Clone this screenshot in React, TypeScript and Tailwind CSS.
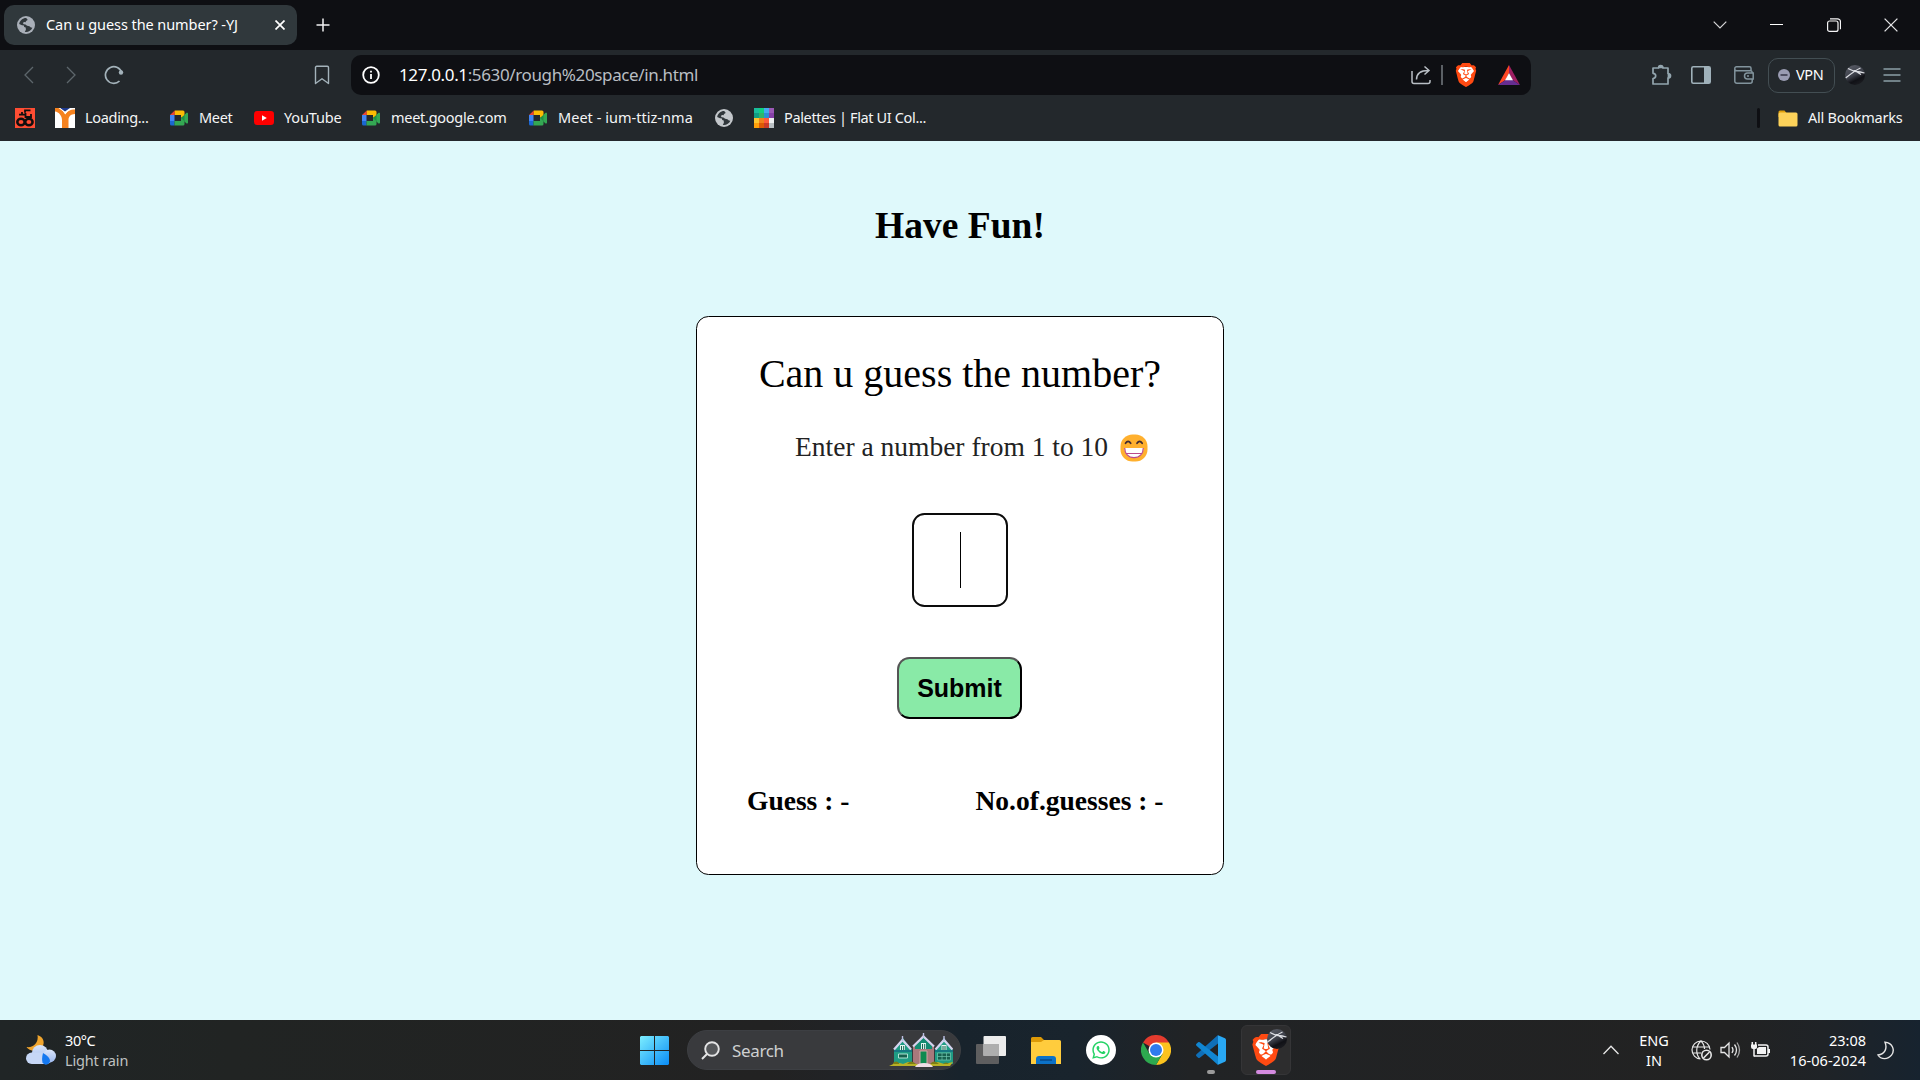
import type { ReactNode } from "react";
import { FaWhatsapp } from "react-icons/fa";
import { SiBrave } from "react-icons/si";

type IconProps = { className?: string };

const SANS = "font-['Noto_Sans',sans-serif]";

function Globe({ className = "" }: IconProps) {
  return (
    <svg viewBox="0 0 18 18" className={`h-[18px] w-[18px] shrink-0 ${className}`}>
      <circle cx="9" cy="9" r="9" fill="currentColor" />
      <path
        d="M9.2 1.9C5.6 1.9 2.6 4.600 2.200 8L5 9.300l1.900.2.300 1.500 1.500.4.200 2.300-1.100 2.200c3 .6 6.300-1 7.600-4.100l-1.500-.3-1.500-1.300-2.300-.5-1.600-1.300-1.800-.2-.9-1.100 1.300-1 1.800.100.700-1.500 1.200-.8z"
        className="fill-[#30373b]"
      />
      <path d="M10 4.500l2.500 1 1.500 2h-2.200l-1.200 1-1.500-.5.500-1.200-1.400-.6z" fill="currentColor" />
    </svg>
  );
}

function MeetIcon() {
  return (
    <svg viewBox="0 0 19 16" className="h-4 w-[19px] shrink-0">
      <path d="M0 5h4.500v6.500H0z" fill="#4285f4" />
      <path d="M0 11h4.500v4.500H1.500A1.500 1.500 0 0 1 0 14z" fill="#1a67d2" />
      <path d="M0 5L4.800.5V5z" fill="#ea4335" />
      <path d="M4.800.5H13A1.500 1.500 0 0 1 14.500 2v3.500L11 8V5H4.800z" fill="#fbbc04" />
      <path d="M4.500 11H11V8l3.500-2v8a1.500 1.500 0 0 1-1.500 1.500H4.500z" fill="#34a853" />
      <path d="M11 8l5.500-5c.6-.5 1.500-.2 1.500.6v9c0 .8-.9 1.100-1.500.6z" fill="#1e9144" />
      <path d="M14.500 5l2-2c.6-.5 1.500-.2 1.500.6v9c0 .8-.9 1.100-1.500.6l-2-1.800z" fill="#34a853" />
    </svg>
  );
}

function CounterIcon() {
  return (
    <svg viewBox="0 0 20 20" className="h-5 w-5 shrink-0">
      <rect width="20" height="20" fill="#ff4d33" />
      <g fill="none" stroke="#120e0e">
        <ellipse cx="6" cy="14" rx="3.700" ry="3.200" strokeWidth="2.500" />
        <ellipse cx="13.900" cy="14" rx="3.700" ry="3.200" strokeWidth="2.500" />
        <path d="M15.500 2.300H10v2.500M4 6.700h7M7 4v3.500M10.500 5v4h5.500V6" strokeWidth="1.800" />
      </g>
    </svg>
  );
}

function YIcon() {
  return (
    <svg viewBox="0 0 20 20" className="h-5 w-5 shrink-0">
      <rect width="20" height="20" fill="#fff" />
      <path d="M5 0h10l-5 3.500z" fill="#1d3a8f" />
      <path d="M0 0h3.500C7 1.500 9 4 10.300 6.500 12 3.500 15 1.500 20 1.500V6c-4.500.3-6.500 2.500-6.500 6v8H7v-8C7 8 4 4 0 3.500z" fill="#f5821f" />
      <path d="M4.500.3C7 1.800 9 3.500 10.300 5.800 12 3.200 14.500 1.200 17 .3" fill="none" stroke="#fff" strokeWidth=".9" />
    </svg>
  );
}

function YoutubeIcon() {
  return (
    <svg viewBox="0 0 20 14" className="h-[14px] w-5 shrink-0">
      <rect width="20" height="14" rx="3.200" fill="#f00" />
      <path d="M8 4.300v5.400L12.800 7z" fill="#fff" />
    </svg>
  );
}

const PALETTE = [
  "bg-[#1abc9c]", "bg-[#10d080]", "bg-[#45aaf2]", "bg-[#9b59b6]",
  "bg-[#109d83]", "bg-[#2fb56b]", "bg-[#2b8fd6]", "bg-[#8640a8]",
  "bg-[#fbc531]", "bg-[#f0801c]", "bg-[#ff5a3c]", "bg-[#eef0f2]",
  "bg-[#ff9f0a]", "bg-[#dd5a04]", "bg-[#c93a28]", "bg-[#b9c0c4]",
];

function PaletteIcon() {
  return (
    <div className="grid h-5 w-5 shrink-0 grid-cols-4">
      {PALETTE.map((c) => (
        <div key={c} className={c} />
      ))}
    </div>
  );
}

function BraveIcon({ className = "" }: IconProps) {
  return (
    <svg viewBox="0 0 24 24" className={`shrink-0 ${className}`}>
      <path d="M5 4h14l1.500 5-3 9.500L12 22l-5.500-3.500L3.500 9z" fill="#fff" />
      <SiBrave size={24} color="#ff4a12" />
    </svg>
  );
}

function BallIcon({ className = "" }: IconProps) {
  return (
    <svg viewBox="0 0 20 20" className={`shrink-0 ${className}`}>
      <defs>
        <linearGradient id="ball" x1="0.2" y1="0" x2="0.7" y2="1">
          <stop offset="0" stopColor="#5a5e68" />
          <stop offset="0.500" stopColor="#3b3e48" />
          <stop offset="0.750" stopColor="#101116" />
          <stop offset="1" stopColor="#1c1d22" />
        </linearGradient>
      </defs>
      <circle cx="10" cy="10" r="10" fill="url(#ball)" />
      <path d="M.8 13C5 9.500 9 6 15.500 3M3 3.500c3 1.500 5 2.500 8 3 3 .2 5 .5 8.500 1.500M9.500 5.500l6.500 4" fill="none" stroke="#dcdee3" strokeWidth="1.300" />
    </svg>
  );
}

function FolderIcon() {
  return (
    <svg viewBox="0 0 20 17" className="h-[17px] w-5 shrink-0">
      <path d="M.5 2A1.500 1.500 0 0 1 2 .5h4.500L8.500 3H18v4H.5z" fill="#e0a00c" />
      <rect x=".5" y="2.500" width="19" height="14" rx="1.500" fill="#fdd25a" />
    </svg>
  );
}

function TabStrip() {
  return (
    <div className="flex h-[50px] bg-[#0e0f13] pt-[5px] text-white">
      <div className="ml-1 flex h-10 w-[293px] items-center rounded-[10px] bg-[#30383c] pl-[13px]">
        <Globe className="text-[#a9afb8]" />
        <span className="ml-[11px] w-[229px] whitespace-nowrap text-[14.500px] tracking-[-0.080px]">
          Can u guess the number? -YJ
        </span>
        <svg viewBox="0 0 10 10" className="h-[10px] w-[10px]" fill="none" stroke="#fff" strokeWidth="1.700">
          <path d="M.5.5l9 9M9.500.5l-9 9" />
        </svg>
      </div>
      <svg viewBox="0 0 14 14" className="mt-[13px] ml-[19px] h-[14px] w-[14px]" fill="none" stroke="#f2f2f3" strokeWidth="1.500">
        <path d="M7 .5v13M.5 7h13" />
      </svg>
      <div className="ml-auto flex h-10 items-center pr-[22px]">
        <svg viewBox="0 0 14 8" className="h-2 w-[14px]" fill="none" stroke="#d6d6d8" strokeWidth="1.200">
          <path d="M.7.7L7 7 13.300.7" />
        </svg>
        <div className="mb-px ml-[43px] h-px w-[13px] bg-white" />
        <svg viewBox="0 0 14 14" className="ml-[44px] h-[14px] w-[14px]" fill="none" stroke="#f5f5f6" strokeWidth="1.200">
          <rect x=".6" y="3" width="10.400" height="10.400" rx="2" />
          <path d="M3 .8h7.500a3 3 0 0 1 3 3v7.500" />
        </svg>
        <svg viewBox="0 0 14 14" className="ml-[43px] h-[14px] w-[14px]" fill="none" stroke="#e4e4e6" strokeWidth="1.300">
          <path d="M.6.6l12.800 12.800M13.400.6L.6 13.400" />
        </svg>
      </div>
    </div>
  );
}

function Toolbar() {
  return (
    <div className="flex h-[50px] items-center bg-[#23282c] pl-6">
      <svg viewBox="0 0 10 18" className="h-[18px] w-[10px]" fill="none" stroke="#5d666c" strokeWidth="1.300">
        <path d="M9 1L1 9l8 8" />
      </svg>
      <svg viewBox="0 0 10 18" className="ml-8 h-[18px] w-[10px]" fill="none" stroke="#5d666c" strokeWidth="1.300">
        <path d="M1 1l8 8-8 8" />
      </svg>
      <svg viewBox="0 0 20 20" className="ml-7 h-5 w-5" fill="none" stroke="#a3b2ba" strokeWidth="1.700">
        <path d="M17.800 8A8.300 8.300 0 1 0 15.500 16" />
        <circle cx="17" cy="7.500" r="2.200" fill="#a3b2ba" stroke="none" />
      </svg>
      <svg viewBox="0 0 16 20" className="ml-[190px] h-5 w-4" fill="none" stroke="#a3b2ba" strokeWidth="1.400" strokeLinejoin="round">
        <path d="M1.500 18.500V2.500a1.200 1.200 0 0 1 1.200-1.200h10.600a1.200 1.200 0 0 1 1.200 1.200v16L8 13.800z" />
      </svg>
      <div className="ml-[21px] flex h-10 w-[1180px] items-center rounded-[10px] bg-[#0e0f13] pl-[11px]">
        <svg viewBox="0 0 18 18" className="h-[18px] w-[18px]" fill="none" stroke="#fff" strokeWidth="1.800">
          <circle cx="9" cy="9" r="7.800" />
          <path d="M9 8v5M9 4.800v1.700" />
        </svg>
        <span className="ml-[19px] w-[1012px] whitespace-nowrap text-[17px] tracking-[-0.370px] text-[#b9bec3]">
          <span className="text-white">127.0.0.1</span>:5630/rough%20space/in.html
        </span>
        <svg viewBox="0 0 20 20" className="h-5 w-5" fill="none" stroke="#b9bfc5" strokeWidth="1.500">
          <path d="M1 6v10.500a2 2 0 0 0 2 2h14a2 2 0 0 0 2-2V15" />
          <path d="M5.500 14.500c0-6 4-9 12-9M13.500 1.500l4.500 4-4.500 4" />
        </svg>
        <div className="ml-[10px] h-5 w-[1.500px] bg-[#5b6065]" />
        <BraveIcon className="ml-[11px] h-6 w-6" />
        <svg viewBox="0 0 22 20" className="ml-[20px] h-5 w-[22px]">
          <path d="M11 0L0 20l7.500-5L11 8z" fill="#ff4724" />
          <path d="M11 0l11 20-7.500-5L11 8z" fill="#9e1f63" />
          <path d="M0 20h22l-7.500-5h-7z" fill="#662d91" />
          <path d="M11 8l-4 7.200h8z" fill="#fff" />
        </svg>
      </div>
      <svg viewBox="0 0 22 22" className="ml-[120px] h-[22px] w-[22px]" fill="none" stroke="#93a5ae" strokeWidth="1.700" strokeLinejoin="round">
        <path d="M2 4h5.500a2.300 2.300 0 0 1 4.500 0h5v5.500a2.300 2.300 0 0 1 0 4.500v6H2v-5.500c3.600-.4 3.600-5 0-5.200z" />
        <path d="M7.700 3.500a2 2 0 0 1 4 0zM17.500 9.800a2 2 0 0 1 0 4z" fill="#93a5ae" />
      </svg>
      <svg viewBox="0 0 20 18" className="ml-[18px] h-[18px] w-5" fill="none" stroke="#9fb1ba" strokeWidth="1.600">
        <rect x=".8" y=".8" width="18.400" height="16.400" rx="1.500" />
        <path d="M13 1h6v16h-6z" fill="#9fb1ba" stroke="none" />
      </svg>
      <svg viewBox="0 0 20 18" className="ml-[23px] h-[18px] w-5" fill="none" stroke="#82949d" strokeWidth="1.500">
        <path d="M17 4.500V2.300A1.500 1.500 0 0 0 15.500.8h-13A1.700 1.700 0 0 0 .8 2.500v12.700a2 2 0 0 0 2 2h13.400a2 2 0 0 0 2-2V13M.8 3.500q.5 1.200 2 1.200h14q1.400 0 1.400 1.800M19.200 7h-5.700a3 3 0 0 0 0 6h5.700zM13 10h2" />
      </svg>
      <div className="ml-[14px] flex h-[35px] w-[67px] items-center rounded-[10px] border border-[#434e53] pl-[9px] text-white">
        <svg viewBox="0 0 12 12" className="h-3 w-3">
          <circle cx="6" cy="6" r="6" fill="#9a9cb2" />
          <path d="M2.500 6h7" stroke="#3b3d4d" strokeWidth="1.600" />
        </svg>
        <span className="ml-[6px] text-[14.500px] tracking-[-0.400px]">VPN</span>
      </div>
      <BallIcon className="ml-[10px] h-5 w-5" />
      <svg viewBox="0 0 18 14" className="ml-[18px] h-[14px] w-[18px]" fill="none" stroke="#8c9ea7" strokeWidth="1.500">
        <path d="M.5 1h17M.5 7h17M.5 13h17" />
      </svg>
    </div>
  );
}

function Bookmark({ icon, label, className }: { icon: ReactNode; label?: string; className: string }) {
  return (
    <div className={`flex shrink-0 items-center ${className}`}>
      {icon}
      {label && <span className="whitespace-nowrap">{label}</span>}
    </div>
  );
}

function BookmarksBar() {
  return (
    <div className="flex h-[41px] items-center bg-[#23282c] pb-[5px] pl-[15px] text-[14.500px] tracking-[-0.320px] text-[#f4f5f6]">
      <Bookmark icon={<CounterIcon />} className="w-10" />
      <Bookmark icon={<YIcon />} label="Loading..." className="w-[115px] gap-[10px]" />
      <Bookmark icon={<MeetIcon />} label="Meet" className="w-[84px] gap-[10px]" />
      <Bookmark icon={<YoutubeIcon />} label="YouTube" className="w-[108px] gap-[10px] tracking-[-0.150px]" />
      <Bookmark icon={<MeetIcon />} label="meet.google.com" className="w-[167px] gap-[10px] tracking-[-0.270px]" />
      <Bookmark icon={<MeetIcon />} label="Meet - ium-ttiz-nma" className="w-[186px] gap-[10px] tracking-[0.030px]" />
      <Bookmark icon={<Globe className="text-[#c3c7cb]" />} className="w-[39px]" />
      <Bookmark icon={<PaletteIcon />} label="Palettes | Flat UI Col..." className="gap-[10px] tracking-[-0.360px]" />
      <div className="mr-[18px] ml-auto h-5 w-[3px] rounded-full bg-[#0e0f13]" />
      <Bookmark icon={<FolderIcon />} label="All Bookmarks" className="w-[142px] gap-[10px] tracking-[-0.250px]" />
    </div>
  );
}

function GrinEmoji() {
  return (
    <svg viewBox="0 0 28 28" className="mt-px h-7 w-7">
      <rect x=".5" y=".5" width="27" height="27" rx="12" fill="#ffb02e" />
      <path d="M5.500 9.300q2.600-4 5.200 0M17 9.300q2.600-4 5.200 0" fill="none" stroke="#402a32" strokeWidth="1.700" strokeLinecap="round" />
      <path d="M4.500 14h19c.3 5-3.500 9.800-9.500 9.800S4.200 19 4.500 14z" fill="#fff" />
      <path d="M4.700 14c0 5.500 3.500 9.600 9.300 9.600s9.300-4.100 9.300-9.600M5.500 19.500h17" fill="none" stroke="#bb4a8c" strokeWidth="1.200" />
    </svg>
  );
}

function Game() {
  return (
    <main className="flex h-[879px] flex-col items-center bg-[#dff9fb] pt-[63px] font-['Liberation_Serif',serif] text-black">
      <h1 className="h-[44px] text-[37.500px] leading-[44px] font-bold">Have Fun!</h1>
      <section className="mt-[68px] flex h-[559px] w-[528px] flex-col items-center rounded-[12.500px] border border-black bg-white">
        <h2 className="mt-[34px] h-[46px] text-[40px] leading-[46px]">Can u guess the number?</h2>
        <div className="mt-[34px] flex h-8 w-full items-center gap-[12px] pl-[98px] text-[27.500px] leading-8 text-[#222]">
          <span className="whitespace-nowrap">Enter a number from 1 to 10</span>
          <GrinEmoji />
        </div>
        <div className="mt-[50px] flex h-[94px] w-24 items-center justify-center rounded-[12.500px] border-2 border-[#0c0c0c]">
          <div className="h-14 w-px bg-black" />
        </div>
        <button className="mt-[50px] mr-px h-[62px] w-[125px] rounded-[12.500px] border-2 border-t-[#555] border-r-black border-b-black border-l-[#555] bg-[#89eaa7] pt-[2px] font-['Liberation_Sans',sans-serif] text-[25px] font-bold">
          Submit
        </button>
        <div className="mt-[66px] flex h-8 w-full pl-[50px] text-[27.500px] leading-8 font-bold">
          <span className="w-[228.500px]">Guess : -</span>
          <span className="whitespace-nowrap">No.of.guesses : -</span>
        </div>
      </section>
    </main>
  );
}

function WeatherIcon() {
  return (
    <svg viewBox="0 0 30 30" className="h-[30px] w-[30px]">
      <defs>
        <linearGradient id="cloud" x1="0" y1="0" x2="0" y2="1">
          <stop offset="0" stopColor="#dbe6fa" />
          <stop offset="1" stopColor="#9db9ee" />
        </linearGradient>
      </defs>
      <path d="M11.500 0c6 2 8 7.500 4.500 12.500C11 18 3 16 .5 12 7 13 13 8 11.500 0z" fill="#f0a52e" />
      <circle cx="14" cy="18" r="8" fill="url(#cloud)" />
      <rect x="0" y="17.500" width="26" height="11.500" rx="5.700" fill="#c6d7f6" />
      <circle cx="23.500" cy="21" r="6.500" fill="url(#cloud)" />
      <path d="M17 18q7 4 7 8a4 4 0 0 1-7.500 1.500q-1-4 .5-9.500z" fill="#1478f0" />
    </svg>
  );
}

function HousesIcon() {
  return (
    <svg viewBox="0 0 64 34" className="h-[34px] w-16">
      <path d="M5 17l9-12 9 12v14H5z" fill="#1f9c84" />
      <path d="M46 17l9-12 9 12v14H46z" fill="#1f9c84" />
      <path d="M24 14L34 2l11 12v18H24z" fill="#a9797c" />
      <path d="M26 13l8-9 9 9v3H26z" fill="#148c72" />
      <path d="M5 16.500L13.500 7l8.500 9.500M24 13.500L34.500 3.500 45 13.500M46.500 16.500L55 7l8.500 9.500" fill="none" stroke="#d5d3ef" strokeWidth="2.200" />
      <path d="M13.500 3v5M34.500 0v5M55 3v5" stroke="#bcbfe2" strokeWidth="1.400" />
      <path d="M11 12h5v5h-5zM32 10h5v6h-5zM52.500 12h5v5h-5z" fill="#dff5ee" />
      <path d="M12.500 13v4M14.700 13v4M33.500 11v5M35.700 11v5M54 13v4M56 13v4" stroke="#17604f" />
      <path d="M5 18h18M46 18h18" stroke="#166b82" strokeWidth="1.500" />
      <path d="M9.500 21h9v4h-9z" fill="#17604f" stroke="#bfeee0" strokeWidth=".9" />
      <path d="M48.500 20h13v7h-13z" fill="#17604f" stroke="#6fc4ae" strokeWidth=".8" />
      <path d="M53 20v7M57.500 20v7M48.500 23.500h13" stroke="#6fc4ae" strokeWidth=".7" />
      <path d="M31 18h7v14h-7z" fill="#0f8a50" stroke="#d4a8a8" />
      <path d="M0 33q8-5 14-2l5-2 8 2h16l6-2 6 2 9-2-3 4z" fill="#b8b126" />
      <path d="M4 30q3-3 6 0v1H4zM18 31q4-5 9 0zM41 31q4-5 9 0zM54 31q3-3 6 0z" fill="#7d7d14" />
      <path d="M26 34q2-4 9-4t9 4z" fill="#efdde6" />
    </svg>
  );
}

function ChromeIcon() {
  return (
    <svg viewBox="0 0 30 30" className="h-[30px] w-[30px]">
      <path d="M15 15L2 7.500A15 15 0 0 1 28 7.500z" fill="#e33b2e" />
      <path d="M15 15V7.500h13A15 15 0 0 1 15 30l6.500-11.300z" fill="#fcc31e" />
      <path d="M15 15l6.500 3.700L15 30A15 15 0 0 1 2 7.500l6.500 11.200z" fill="#2da94f" />
      <circle cx="15" cy="15" r="7.500" fill="#fff" />
      <circle cx="15" cy="15" r="6" fill="#2f7bee" />
    </svg>
  );
}

function CodeIcon() {
  return (
    <svg viewBox="0 0 30 30" className="h-[30px] w-[30px]">
      <path d="M22 8.500L3.800 22.800a1.400 1.400 0 0 1-1.700-.1L.5 21.200a1.300 1.300 0 0 1 0-1.900L22 0z" fill="#0f6fb8" />
      <path d="M22 21.500L3.800 7.200a1.400 1.400 0 0 0-1.700.1L.5 8.800a1.300 1.300 0 0 0 0 1.900L22 30z" fill="#1186d2" />
      <path d="M22 .2L29 3.300a1.800 1.800 0 0 1 1 1.600v20.200a1.800 1.800 0 0 1-1 1.600l-7 3.100z" fill="#29a8f4" />
    </svg>
  );
}

function Taskbar() {
  return (
    <footer className="flex h-[60px] items-center bg-[linear-gradient(90deg,#202526_0%,#212423_12%,#222222_40%,#20242a_47%,#18232c_50%,#19242d_56%,#212325_62%,#222222_90%,#1f2327_95%,#17232f_100%)] text-white">
      <div className="flex w-[640px] items-center gap-[9px] pl-[26px]">
        <WeatherIcon />
        <div className="text-[14.500px] leading-5 tracking-[-0.150px]">
          <div className="tracking-[-0.400px]">30°C</div>
          <div className="text-[#bfc1c1]">Light rain</div>
        </div>
      </div>
      <svg viewBox="0 0 29 29" className="h-[29px] w-[29px]">
        <defs>
          <linearGradient id="win" x1="0" y1="0" x2="1" y2="1">
            <stop offset="0" stopColor="#7ceeff" />
            <stop offset="1" stopColor="#0a8cf5" />
          </linearGradient>
        </defs>
        <path d="M1 0h13v14H0V1zM15 0h13l1 1v13H15zM0 15h14v14H1l-1-1zM15 15h14v13l-1 1H15z" fill="url(#win)" />
      </svg>
      <div className="ml-[18px] flex h-10 w-[274px] items-center rounded-full border border-[#3d3f43] bg-[#393a3d] pl-[13px]">
        <svg viewBox="0 0 19 19" className="h-[19px] w-[19px]" fill="none" stroke="#e4e4e5" strokeWidth="1.900">
          <circle cx="11" cy="8" r="6.800" fill="#55575a" />
          <path d="M6 13L1 18" />
        </svg>
        <span className="ml-3 w-[157px] pt-px text-[17px] tracking-[-0.350px] text-[#cfd0d1]">Search</span>
        <HousesIcon />
      </div>
      <svg viewBox="0 0 30 28" className="ml-[15px] h-7 w-[30px]">
        <rect x="0" y="8" width="23" height="20" rx="1" fill="#5e5e5f" />
        <rect x="7.500" y="0" width="22.500" height="20" rx="1" fill="#ececec" />
        <path d="M7.500 8H23v12H7.500z" fill="#aeaeae" />
      </svg>
      <svg viewBox="0 0 30 27" className="ml-[25px] h-[27px] w-[30px]">
        <path d="M0 1.500A1.500 1.500 0 0 1 1.500 0H10l3 3H28v6H0z" fill="#dd9a07" />
        <path d="M0 5h10l3-2h15.500A1.500 1.500 0 0 1 30 4.500V27H0z" fill="#ffcc3d" />
        <path d="M5 27v-5a3 3 0 0 1 3-3h14a3 3 0 0 1 3 3v5z" fill="#0c72c8" />
        <path d="M9 23h12" stroke="#07427d" strokeWidth="1.300" />
      </svg>
      <div className="ml-[25px] flex h-[30px] w-[30px] items-center justify-center rounded-full bg-white text-[#25d366]">
        <FaWhatsapp size={20} />
      </div>
      <div className="ml-[25px]">
        <ChromeIcon />
      </div>
      <div className="ml-[25px] flex h-[50px] w-[30px] flex-col items-center pt-[10px]">
        <CodeIcon />
        <div className="mt-[5px] h-1 w-2 shrink-0 rounded-full bg-[#9b9b9b]" />
      </div>
      <div className="relative ml-[15px] flex h-[50px] w-[50px] flex-col items-center rounded-md border border-[#353537] bg-[#2d2d2e] pt-[8px]">
        <BraveIcon className="h-8 w-8" />
        <BallIcon className="absolute top-[3px] left-[25px] h-5 w-5" />
        <div className="mt-[4px] h-1 w-5 shrink-0 rounded-full bg-[#d48be0]" />
      </div>
      <svg viewBox="0 0 16 10" className="ml-[312px] h-[10px] w-4" fill="none" stroke="#e8e8e8" strokeWidth="1.300">
        <path d="M.5 9L8 1.200 15.500 9" />
      </svg>
      <div className="ml-[19px] w-8 text-center text-[14.500px] leading-5">
        <div>ENG</div>
        <div>IN</div>
      </div>
      <svg viewBox="0 0 21 21" className="ml-[21px] h-[21px] w-[21px]" fill="none" stroke="#e6e6e6" strokeWidth="1.200">
        <path d="M19 9.500A9 9 0 1 0 9.500 19M1 7h18M1 13h9M10 1c-5.500 5-5.500 13-1 18M10 1c2 2 3.500 5 3.500 8" />
        <circle cx="15.500" cy="15" r="4.700" strokeWidth="1.600" />
        <path d="M12.500 18l6-6" strokeWidth="1.600" />
      </svg>
      <svg viewBox="0 0 21 18" className="ml-[8px] h-[18px] w-[21px]" fill="none" stroke="#e6e6e6" strokeWidth="1.300">
        <path d="M1 6.500v5h3.500L9 16V2L4.500 6.500zM12 6q2 3 0 6" />
        <path d="M14.500 3.500q4 5.500 0 11" />
        <path d="M17 1.500q5 7.500 0 15" stroke="#a5a5a5" />
      </svg>
      <svg viewBox="0 0 21 16" className="ml-[9px] h-4 w-[21px]" fill="none" stroke="#f3f3f3" strokeWidth="1.500">
        <path d="M8 3h8a2 2 0 0 1 2 2v7a2 2 0 0 1-2 2H4" />
        <path d="M7 6.500l2-1.500h7v7H7zM1 2.500h6v3A2 2 0 0 1 5 7H3a2 2 0 0 1-2-2zM18 7h2v4h-2z" fill="#f3f3f3" stroke="none" />
        <path d="M2.300 0v3M5.700 0v3M4 7v7.500" />
      </svg>
      <div className="ml-auto pr-[11px] text-right text-[14.500px] leading-5">
        <div className="-mt-px">23:08</div>
        <div className="tracking-[0.050px]">16-06-2024</div>
      </div>
      <svg viewBox="0 0 18 19" className="mr-[25px] h-[19px] w-[18px]" fill="none" stroke="#e6e6e6" strokeWidth="1.400">
        <path d="M8 1.200c7.500.3 10.300 8 6.500 13C11 18.600 4 19 1 14 8 13 10.500 7.500 8 1.200z" />
      </svg>
    </footer>
  );
}

export default function App() {
  return (
    <div className={`flex h-[1080px] w-[1920px] flex-col overflow-hidden ${SANS}`}>
      <TabStrip />
      <Toolbar />
      <BookmarksBar />
      <Game />
      <Taskbar />
    </div>
  );
}
